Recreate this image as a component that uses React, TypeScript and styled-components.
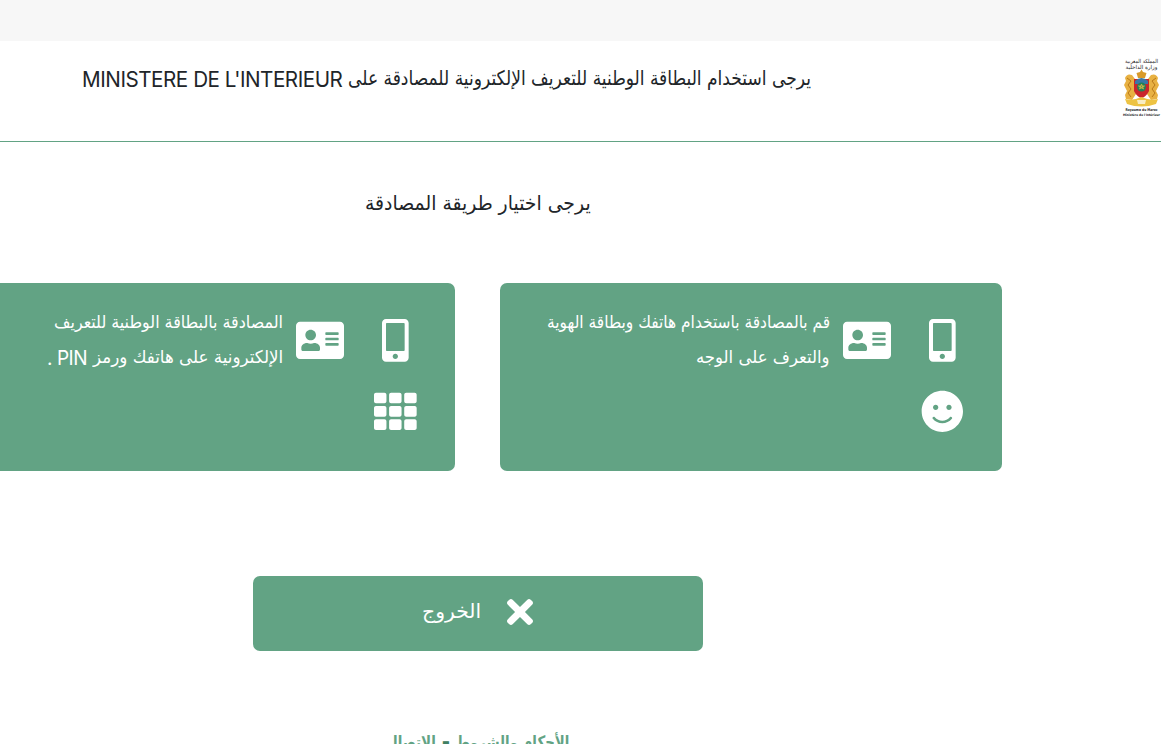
import React, { useLayoutEffect, useRef, useState } from "react";
import styled, { createGlobalStyle } from "styled-components";
import { FaAddressCard, FaMobileAlt, FaSmile, FaTh, FaTimes } from "react-icons/fa";

const GlobalStyle = createGlobalStyle`
  * { box-sizing: border-box; }
  html, body { margin: 0; padding: 0; overflow: hidden; background: #fff; }
  body { font-family: "DejaVu Sans", sans-serif; color: #212529; }
`;

const Page = styled.div`
  width: 1161px;
  height: 744px;
  overflow: hidden;
  direction: rtl;
  background: #fff;
`;

const TopBar = styled.div`
  height: 41px;
  background: #f7f7f7;
`;

const Header = styled.header`
  display: flex;
  justify-content: flex-start;
  align-items: flex-start;
  height: 101px;
  padding-top: 16px;
  border-bottom: 1px solid #62a384;
`;

const LogoBox = styled.div`
  flex: none;
  width: 39px;
  height: 60px;
  margin-left: 311px;
`;

const Title = styled.h1`
  display: flex;
  gap: 6px;
  margin: 5px 0 0;
  font-weight: 400;
`;

const Main = styled.main`
  display: flex;
  flex-direction: column;
  align-items: center;
  width: 1049px;
  margin-right: 159px;
`;

const Subtitle = styled.h2`
  margin: 45px 0 0;
  height: 96px;
  font-weight: 400;
`;

const Cards = styled.div`
  display: flex;
  gap: 45px;
  width: 1049px;
`;

const Card = styled.button`
  display: flex;
  align-items: flex-start;
  width: 502px;
  height: 188px;
  padding: 36px 38px 0 0;
  border: 0;
  border-radius: 7px;
  background: #62a384;
  color: #fff;
  font: inherit;
`;

const IconColumn = styled.div`
  display: flex;
  flex-direction: column;
  align-items: center;
  gap: 28.5px;
  width: 43px;
  margin-left: 30px;
  svg { display: block; }
`;

const CardIcon = styled.div`
  width: 48px;
  margin-left: 13px;
  svg { display: block; }
`;

const CardText = styled.div`
  margin-top: -14px;
`;

const CardLine = styled.div`
  display: flex;
  gap: 6px;
  height: 35px;
`;

const ExitButton = styled.button`
  display: flex;
  align-items: center;
  width: 450px;
  height: 75px;
  margin-top: 105px;
  padding: 0 170px 3px 0;
  border: 0;
  border-radius: 7px;
  background: #62a384;
  color: #fff;
  font: inherit;
  gap: 25px;
`;

const Footer = styled.footer`
  display: flex;
  gap: 5px;
  margin-top: 75px;
  color: #62a384;
  font-weight: 700;
`;

const FooterDash = styled.span`
  width: 10px;
  line-height: 30px;
  font-size: 20px;
  text-align: center;
  color: #3f8063;
`;

const FitBox = styled.span<{ $width: number; $size: number; $line: number; $latin?: boolean; $drop?: number }>`
  display: block;
  flex: none;
  width: ${(p) => p.$width}px;
  height: ${(p) => p.$line}px;
  margin-top: ${(p) => p.$drop ?? 0}px;
  font-size: ${(p) => p.$size}px;
  line-height: ${(p) => p.$line}px;
  font-family: ${(p) => (p.$latin ? '"Inter", sans-serif' : '"DejaVu Sans", sans-serif')};
  letter-spacing: ${(p) => (p.$latin ? "-0.5px" : "normal")};
  white-space: nowrap;
`;

const FitInner = styled.span`
  display: inline-block;
  transform-origin: right center;
`;

type FitProps = { width: number; size: number; line: number; latin?: boolean; drop?: number; children: string };

function Fit({ width, size, line, latin, drop, children }: FitProps) {
  const ref = useRef<HTMLSpanElement>(null);
  const [scale, setScale] = useState(1);
  useLayoutEffect(() => {
    if (ref.current) setScale(width / ref.current.offsetWidth);
  }, [width, size, children]);
  return (
    <FitBox $width={width} $size={size} $line={line} $latin={latin} $drop={drop}>
      <FitInner ref={ref} style={{ transform: `scaleX(${scale})` }}>{children}</FitInner>
    </FitBox>
  );
}

const LogoText = styled.text`
  font-family: "DejaVu Sans", sans-serif;
  fill: #222;
`;

function Logo() {
  return (
    <svg width="39" height="60" viewBox="0 0 39 60" direction="ltr">
      <LogoText x="19.5" y="6" fontSize="5.5" textAnchor="middle" textLength="33" lengthAdjust="spacingAndGlyphs">المملكة المغربية</LogoText>
      <LogoText x="19.5" y="12" fontSize="5.5" textAnchor="middle" textLength="32" lengthAdjust="spacingAndGlyphs">وزارة الداخلية</LogoText>
      <path d="M19.5 12.500l1.500 2.500 3.500 1-1.500 5h-7l-1.500-5 3.500-1z" fill="#d99a2a" />
      <path d="M3 21q2-5 7-3l3 4-1 7 2 8-4 6-6-1-1-4 2-4-3-6 2-4zM36 21q-2-5-7-3l-3 4 1 7-2 8 4 6 6-1 1-4-2-4 3-6-2-4z" fill="#e8b142" />
      <path d="M5 21l4 3-3 4 3 4-3 4 3 4M34 21l-4 3 3 4-3 4 3 4-3 4" fill="none" stroke="#b97818" strokeWidth="1" />
      <path d="M12 22h15v12q-3 6-7.500 7q-4.500-1-7.500-7z" fill="#c9262c" />
      <path d="M13 24q6.500-6 13 0v3h-13z" fill="#3978a8" />
      <circle cx="19.500" cy="30" r="4.500" fill="#238257" />
      <path d="M19.500 27l2 5-5-3h6l-5 3z" fill="none" stroke="#e9bd46" strokeWidth=".7" />
      <path d="M3 42q8 2 16.500-2q8.500 4 16.500 2l-2 5q-14.500 5-29 0z" fill="#edc343" />
      <path d="M15 43h9l-1 4h-7z" fill="#f8edc4" />
      <LogoText x="19.500" y="54" fontSize="3.700" fontWeight="700" textAnchor="middle" textLength="32" lengthAdjust="spacingAndGlyphs">Royaume du Maroc</LogoText>
      <LogoText x="19.500" y="58.500" fontSize="3.200" fontWeight="700" textAnchor="middle" textLength="37" lengthAdjust="spacingAndGlyphs">Ministère de l'Intérieur</LogoText>
    </svg>
  );
}

const ICON = 42.67;

export default function App() {
  return (
    <Page>
      <GlobalStyle />
      <TopBar />
      <Header>
        <LogoBox><Logo /></LogoBox>
        <Title>
          <Fit width={463} size={20} line={32}>يرجى استخدام البطاقة الوطنية للتعريف الإلكترونية للمصادقة على</Fit>
          <Fit width={260} size={22} line={32} latin drop={1}>MINISTERE DE L'INTERIEUR</Fit>
        </Title>
      </Header>
      <Main>
        <Subtitle>
          <Fit width={226} size={20} line={32}>يرجى اختيار طريقة المصادقة</Fit>
        </Subtitle>
        <Cards>
          <Card>
            <IconColumn><FaMobileAlt size={ICON} /><FaSmile size={ICON} /></IconColumn>
            <CardIcon><FaAddressCard size={ICON} style={{ width: 48 }} /></CardIcon>
            <CardText>
              <CardLine><Fit width={283} size={17.5} line={35}>قم بالمصادقة باستخدام هاتفك وبطاقة الهوية</Fit></CardLine>
              <CardLine><Fit width={134} size={17.5} line={35}>والتعرف على الوجه</Fit></CardLine>
            </CardText>
          </Card>
          <Card>
            <IconColumn><FaMobileAlt size={ICON} /><FaTh size={ICON} /></IconColumn>
            <CardIcon><FaAddressCard size={ICON} style={{ width: 48 }} /></CardIcon>
            <CardText>
              <CardLine><Fit width={229} size={17.5} line={35}>المصادقة بالبطاقة الوطنية للتعريف</Fit></CardLine>
              <CardLine>
                <Fit width={190} size={17.5} line={35}>الإلكترونية على هاتفك ورمز</Fit>
                <Fit width={40} size={20} line={35} latin drop={1}>PIN .</Fit>
              </CardLine>
            </CardText>
          </Card>
        </Cards>
        <ExitButton>
          <FaTimes size={38} style={{ width: 26 }} />
          <Fit width={59} size={20} line={32} drop={-3}>الخروج</Fit>
        </ExitButton>
        <Footer>
          <Fit width={113} size={17} line={32}>الأحكام والشروط</Fit>
          <FooterDash>-</FooterDash>
          <Fit width={50} size={17} line={32}>الاتصال</Fit>
        </Footer>
      </Main>
    </Page>
  );
}
